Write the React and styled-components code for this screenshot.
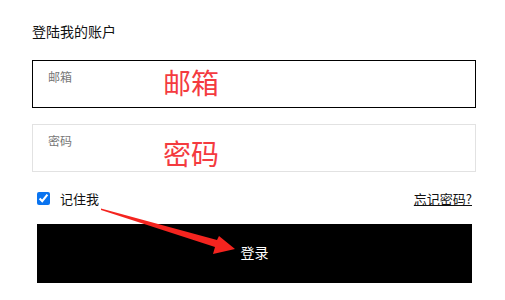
import React from 'react';
import styled, { createGlobalStyle } from 'styled-components';

const Global = createGlobalStyle`
  body {
    margin: 0;
    background: #fff;
    font-family: "Noto Sans CJK SC", "Noto Sans", sans-serif;
  }
`;

const Page = styled.div`
  position: relative;
  width: 505px;
  height: 300px;
  padding: 22px 29px 0 32px;
  box-sizing: border-box;
`;

const Title = styled.h2`
  margin: 0 0 19px;
  font-size: 14px;
  line-height: 19px;
  font-weight: 400;
  color: #111;
`;

const Field = styled.div`
  position: relative;
  height: 48px;
  box-sizing: border-box;
  border: 1px solid ${p => (p.active ? '#000' : '#e2e2e2')};
  padding: 8px 15px;
  margin-bottom: 16px;
`;

const Label = styled.span`
  display: block;
  font-size: 12px;
  line-height: 16px;
  color: #777;
`;

const Note = styled.span`
  position: absolute;
  left: 130px;
  top: ${p => p.top}px;
  font-size: 28px;
  line-height: 34px;
  color: #f43b3f;
`;

const Row = styled.div`
  display: flex;
  align-items: center;
  justify-content: space-between;
  margin: 4px 4px 0 5px;
  height: 20px;
`;

const Remember = styled.label`
  display: flex;
  align-items: center;
  gap: 10px;
  font-size: 13px;
  color: #111;
  input {
    margin: 0;
    width: 13px;
    height: 13px;
    accent-color: #0a74f0;
  }
`;

const Forgot = styled.a`
  font-size: 13px;
  color: #111;
  text-decoration: underline;
`;

const Submit = styled.button`
  display: block;
  margin: 16px 4px 0 5px;
  width: 435px;
  height: 59px;
  padding: 0 0 4px;
  border: 0;
  background: #000;
  color: #fff;
  font-family: inherit;
  font-size: 14px;
`;

const Arrow = styled.svg`
  position: absolute;
  left: 0;
  top: 0;
  pointer-events: none;
`;

export default function App() {
  return (
    <Page>
      <Global />
      <Title>登陆我的账户</Title>
      <Field active>
        <Label>邮箱</Label>
        <Note top={4}>邮箱</Note>
      </Field>
      <Field>
        <Label>密码</Label>
        <Note top={11}>密码</Note>
      </Field>
      <Row>
        <Remember>
          <input type="checkbox" defaultChecked />
          记住我
        </Remember>
        <Forgot href="#">忘记密码?</Forgot>
      </Row>
      <Submit>登录</Submit>
      <Arrow width="505" height="300" viewBox="0 0 505 300">
        <polygon
          points="101,208.5 217,240 219,236 235,249 213,254 215,247 101,210"
          fill="#f4241f"
        />
      </Arrow>
    </Page>
  );
}
